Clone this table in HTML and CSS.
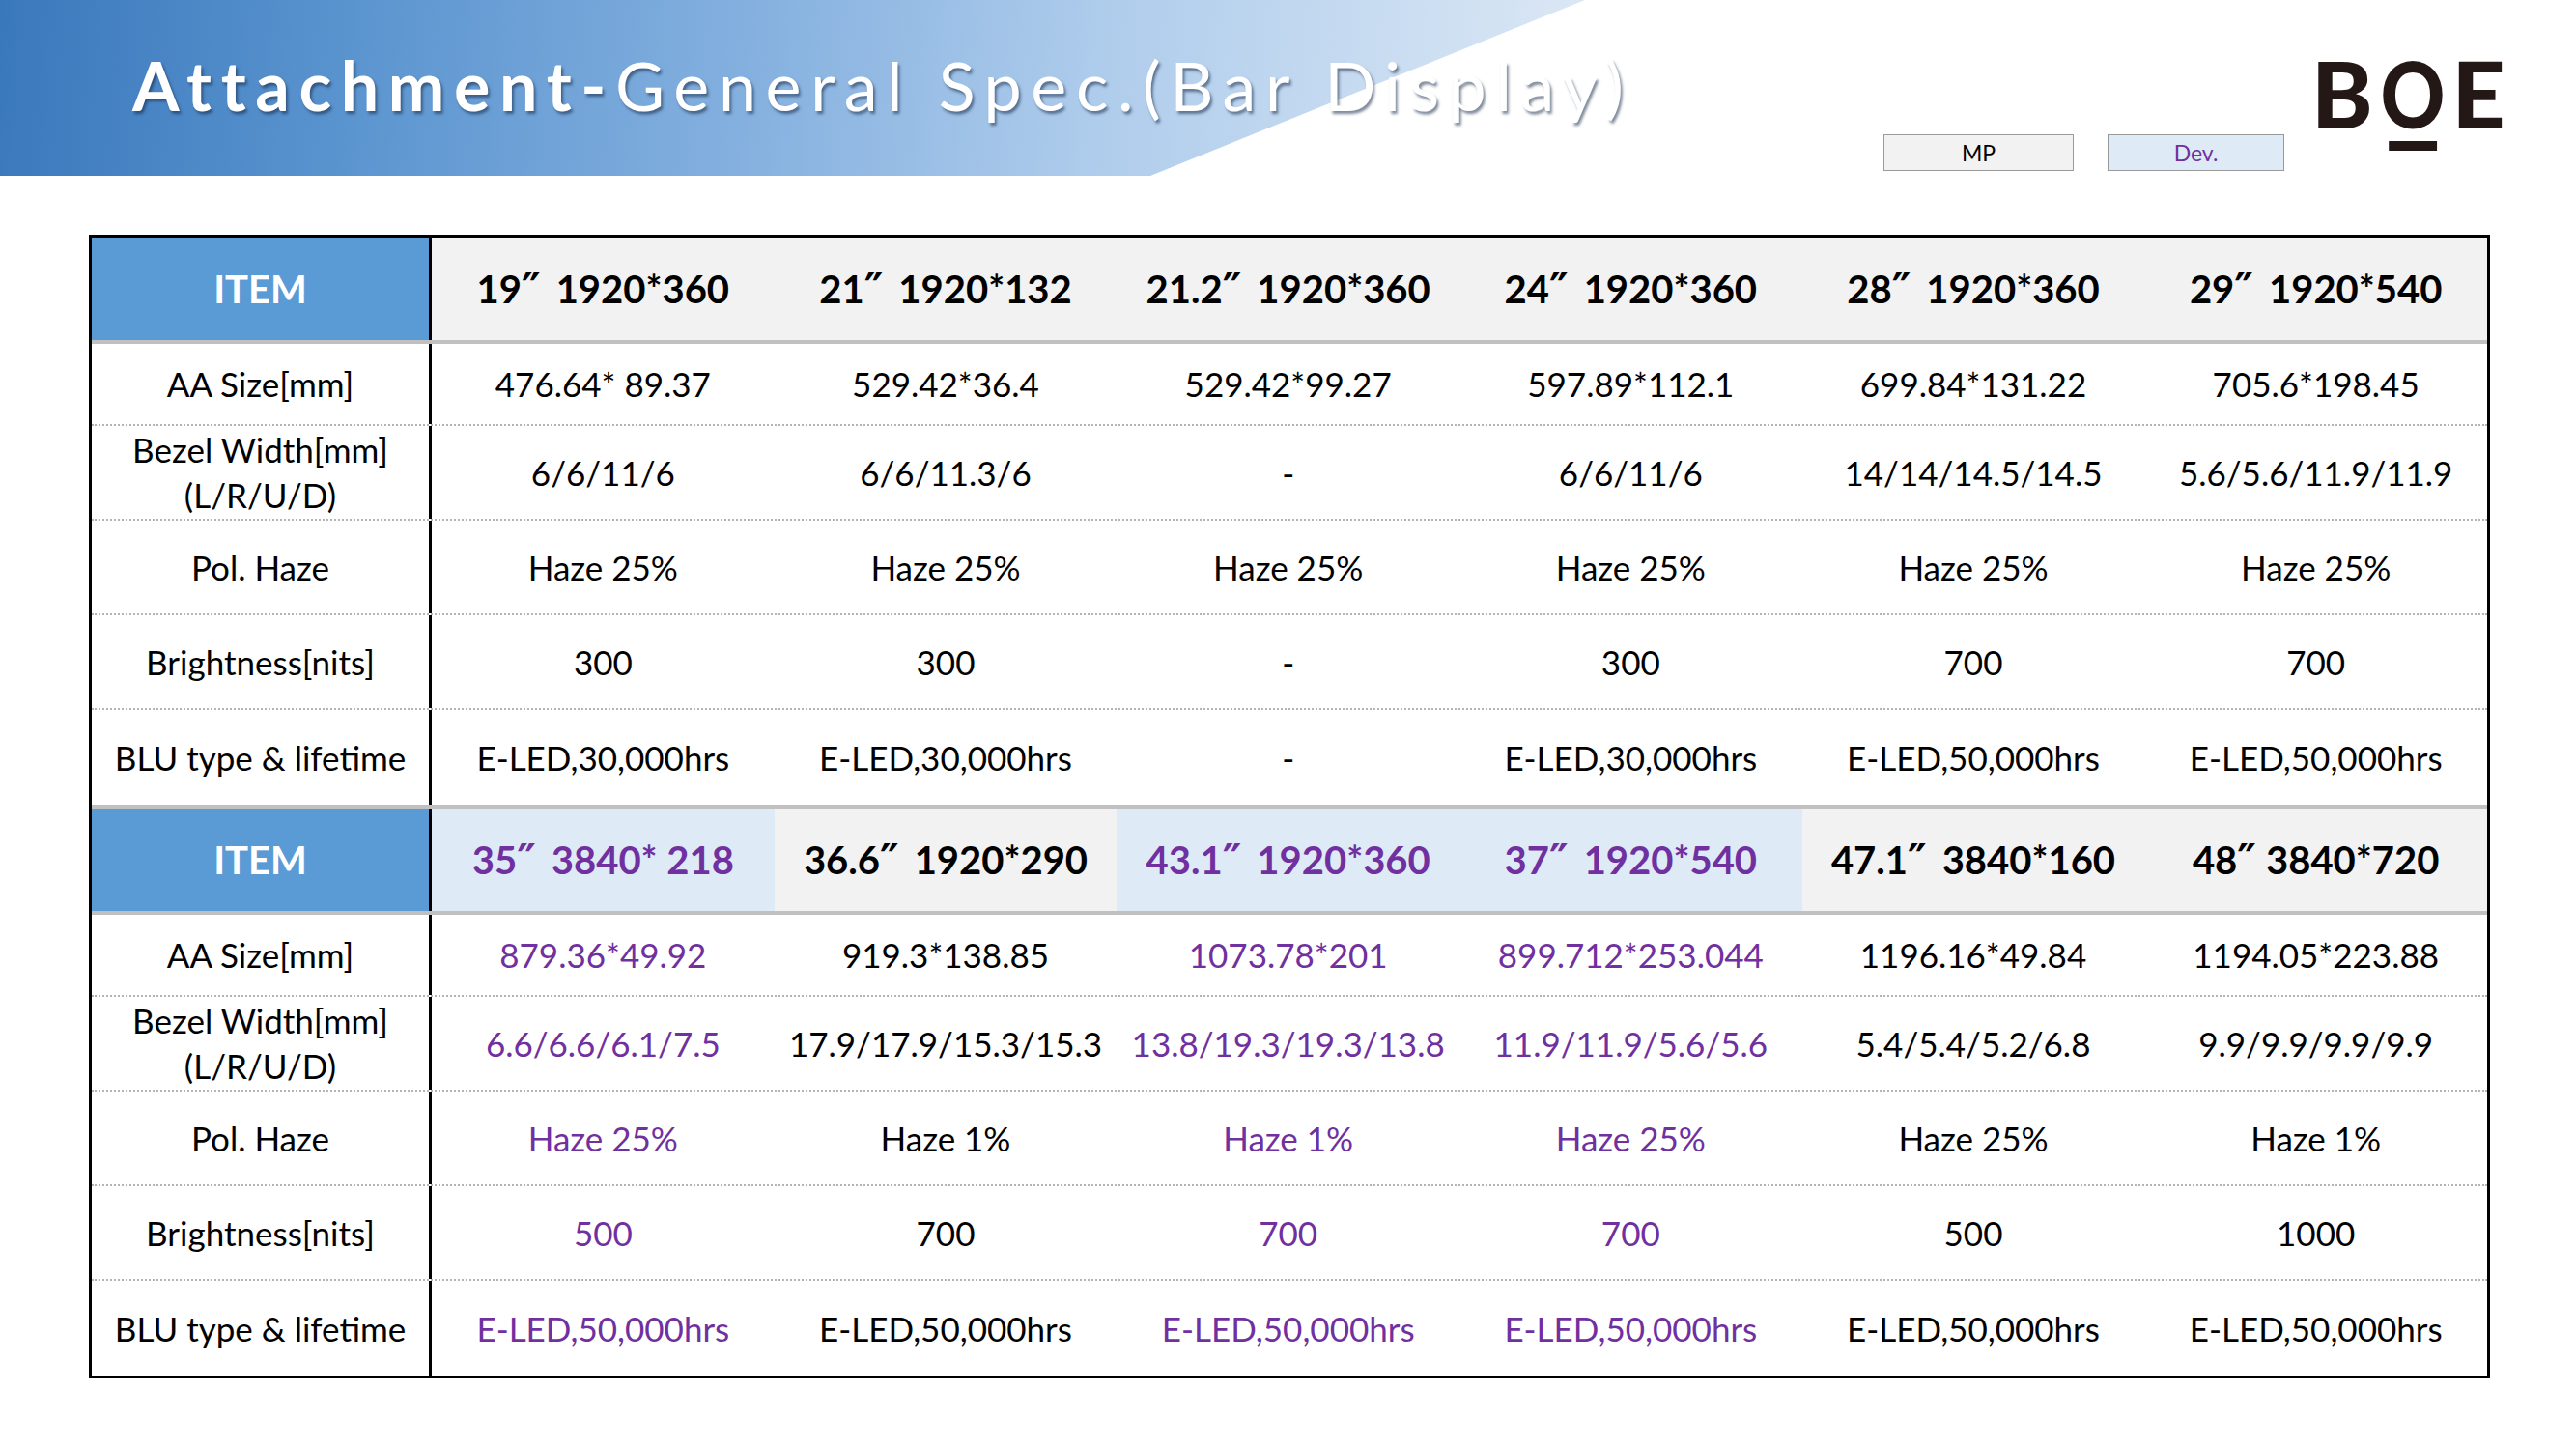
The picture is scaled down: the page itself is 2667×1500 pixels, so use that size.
FILE: index.html
```html
<!DOCTYPE html>
<html lang="en">
<head>
<meta charset="utf-8">
<title>Attachment-General Spec.(Bar Display)</title>
<link rel="stylesheet" href="styles.css">
</head>
<body>
<div class="page">
  <header class="banner">
    <div class="band">
      <h1 class="title"><b>Attachment-</b>General Spec.(Bar Display)</h1>
    </div>
    <div class="legend">
      <span class="tag mp">MP</span>
      <span class="tag dev">Dev.</span>
    </div>
    <div class="logo">B<span class="logo-o">O</span>E</div>
  </header>

  <div class="spec">
    <div class="row head">
      <div class="cell label item">ITEM</div>
      <div class="cell">19<span class="q">″</span>1920*360</div>
      <div class="cell">21<span class="q">″</span>1920*132</div>
      <div class="cell">21.2<span class="q">″</span>1920*360</div>
      <div class="cell">24<span class="q">″</span>1920*360</div>
      <div class="cell">28<span class="q">″</span>1920*360</div>
      <div class="cell">29<span class="q">″</span>1920*540</div>
    </div>
    <div class="row aa">
      <div class="cell label">AA Size[mm]</div>
      <div class="cell">476.64* 89.37</div>
      <div class="cell">529.42*36.4</div>
      <div class="cell">529.42*99.27</div>
      <div class="cell">597.89*112.1</div>
      <div class="cell">699.84*131.22</div>
      <div class="cell">705.6*198.45</div>
    </div>
    <div class="row">
      <div class="cell label two">Bezel Width[mm]<br>(L/R/U/D)</div>
      <div class="cell">6/6/11/6</div>
      <div class="cell">6/6/11.3/6</div>
      <div class="cell">-</div>
      <div class="cell">6/6/11/6</div>
      <div class="cell">14/14/14.5/14.5</div>
      <div class="cell">5.6/5.6/11.9/11.9</div>
    </div>
    <div class="row">
      <div class="cell label">Pol. Haze</div>
      <div class="cell">Haze 25%</div>
      <div class="cell">Haze 25%</div>
      <div class="cell">Haze 25%</div>
      <div class="cell">Haze 25%</div>
      <div class="cell">Haze 25%</div>
      <div class="cell">Haze 25%</div>
    </div>
    <div class="row">
      <div class="cell label">Brightness[nits]</div>
      <div class="cell">300</div>
      <div class="cell">300</div>
      <div class="cell">-</div>
      <div class="cell">300</div>
      <div class="cell">700</div>
      <div class="cell">700</div>
    </div>
    <div class="row last">
      <div class="cell label">BLU type &amp; lifetime</div>
      <div class="cell">E-LED,30,000hrs</div>
      <div class="cell">E-LED,30,000hrs</div>
      <div class="cell">-</div>
      <div class="cell">E-LED,30,000hrs</div>
      <div class="cell">E-LED,50,000hrs</div>
      <div class="cell">E-LED,50,000hrs</div>
    </div>

    <div class="row head second">
      <div class="cell label item">ITEM</div>
      <div class="cell dev">35<span class="q">″</span>3840* 218</div>
      <div class="cell">36.6<span class="q">″</span>1920*290</div>
      <div class="cell dev">43.1<span class="q">″</span>1920*360</div>
      <div class="cell dev">37<span class="q">″</span>1920*540</div>
      <div class="cell">47.1<span class="q">″</span>3840*160</div>
      <div class="cell">48<span class="q narrow">″</span>3840*720</div>
    </div>
    <div class="row aa">
      <div class="cell label">AA Size[mm]</div>
      <div class="cell dev">879.36*49.92</div>
      <div class="cell">919.3*138.85</div>
      <div class="cell dev">1073.78*201</div>
      <div class="cell dev">899.712*253.044</div>
      <div class="cell">1196.16*49.84</div>
      <div class="cell">1194.05*223.88</div>
    </div>
    <div class="row">
      <div class="cell label two">Bezel Width[mm]<br>(L/R/U/D)</div>
      <div class="cell dev">6.6/6.6/6.1/7.5</div>
      <div class="cell">17.9/17.9/15.3/15.3</div>
      <div class="cell dev">13.8/19.3/19.3/13.8</div>
      <div class="cell dev">11.9/11.9/5.6/5.6</div>
      <div class="cell">5.4/5.4/5.2/6.8</div>
      <div class="cell">9.9/9.9/9.9/9.9</div>
    </div>
    <div class="row">
      <div class="cell label">Pol. Haze</div>
      <div class="cell dev">Haze 25%</div>
      <div class="cell">Haze 1%</div>
      <div class="cell dev">Haze 1%</div>
      <div class="cell dev">Haze 25%</div>
      <div class="cell">Haze 25%</div>
      <div class="cell">Haze 1%</div>
    </div>
    <div class="row">
      <div class="cell label">Brightness[nits]</div>
      <div class="cell dev">500</div>
      <div class="cell">700</div>
      <div class="cell dev">700</div>
      <div class="cell dev">700</div>
      <div class="cell">500</div>
      <div class="cell">1000</div>
    </div>
    <div class="row last">
      <div class="cell label">BLU type &amp; lifetime</div>
      <div class="cell dev">E-LED,50,000hrs</div>
      <div class="cell">E-LED,50,000hrs</div>
      <div class="cell dev">E-LED,50,000hrs</div>
      <div class="cell dev">E-LED,50,000hrs</div>
      <div class="cell">E-LED,50,000hrs</div>
      <div class="cell">E-LED,50,000hrs</div>
    </div>
  </div>
</div>
</body>
</html>
```
FILE: styles.css
```css
* { box-sizing: border-box; }

html, body {
  margin: 0;
  padding: 0;
  background: #ffffff;
}

body {
  width: 2667px;
  height: 1500px;
  overflow: hidden;
  font-family: "Lato", "Open Sans", "Liberation Sans", sans-serif;
  color: #000;
}

.page {
  width: 2667px;
  height: 1500px;
}

/* ---------- banner ---------- */
.banner {
  display: flex;
  align-items: flex-start;
  height: 182px;
}

.band {
  position: relative;
  flex: 0 0 1641px;
  width: 1641px;
  min-width: 0;
  height: 182px;
  padding: 53px 0 0 137px;
}

/* decorative gradient shape behind the title */
.band::before {
  content: "";
  position: absolute;
  inset: 0;
  background: linear-gradient(95deg, #3a78bc 0%, #5a94cf 22%, #84b0df 47%, #b0cdec 70%, #dce8f5 100%);
  clip-path: polygon(0 0, 1641px 0, 1191px 182px, 0 182px);
  z-index: 0;
}

.title {
  position: relative;
  z-index: 1;
  margin: 0;
  font-family: "Lato", "Open Sans", sans-serif;
  font-size: 70px;
  line-height: 70px;
  font-weight: 400;
  letter-spacing: 9.6px;
  color: #ffffff;
  white-space: nowrap;
  text-shadow: 2px 3px 3px rgba(20, 40, 70, 0.55);
}

.title b {
  font-weight: 700;
}

.legend {
  display: flex;
  gap: 35px;
  margin: 139px 0 0 309px;
}

.tag {
  display: flex;
  align-items: center;
  justify-content: center;
  height: 38px;
  border: 1px solid #9a9a9a;
  font-size: 23px;
}

.tag.mp {
  width: 197px;
  background: #f2f2f2;
  color: #000;
}

.tag.dev {
  width: 183px;
  background: #deebf7;
  color: #7030a0;
}

.logo {
  margin: 46px 0 0 28px;
  font-family: "Lato", "DejaVu Sans", sans-serif;
  font-weight: 900;
  font-size: 96px;
  line-height: 100px;
  letter-spacing: 2px;
  color: #231815;
}

.logo-o {
  position: relative;
  display: inline-block;
  transform: scaleX(0.86);
}

.logo-o::after {
  content: "";
  position: absolute;
  left: 10px;
  right: 12px;
  bottom: -10px;
  height: 10px;
  background: #231815;
}

/* ---------- table ---------- */
.spec {
  margin: 61px 0 0 92px;
  width: 2486px;
  border: 3px solid #000;
}

.row {
  display: grid;
  grid-template-columns: 352px repeat(6, 1fr);
  height: 98px;
  border-bottom: 2px dotted #b4b4b4;
}

.row.aa {
  height: 85px;
}

.row.last {
  border-bottom: none;
}

.row.head {
  height: 110px;
  border-bottom: 4px solid #c0c0c0;
}

.row.head.second {
  height: 114px;
  border-top: 4px solid #c0c0c0;
}

.cell {
  display: flex;
  align-items: center;
  justify-content: center;
  text-align: center;
  font-size: 35px;
  line-height: 47px;
  white-space: nowrap;
}

.cell.label {
  border-right: 3px solid #000;
}

.cell.dev {
  color: #7030a0;
}

.head .cell {
  background: #f2f2f2;
  font-weight: 700;
  font-size: 40px;
}

.head .cell.dev {
  background: #deebf7;
}

.head .cell.item {
  background: #5b9bd5;
  color: #ffffff;
}

.q {
  font-family: "DejaVu Sans", sans-serif;
  font-weight: 700;
  font-size: 44px;
  margin: 0 16px 0 0;
}

.q.narrow {
  margin-right: 10px;
}
```
